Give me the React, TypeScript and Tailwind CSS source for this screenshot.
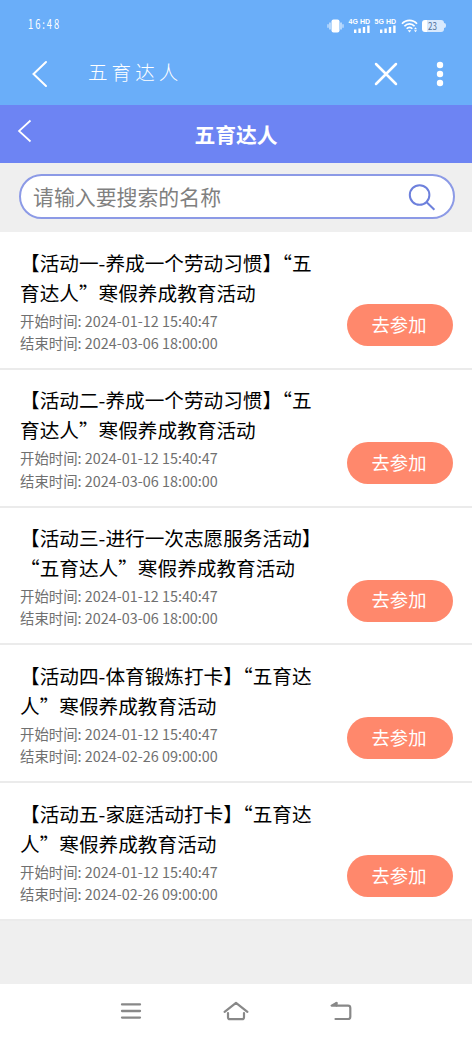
interface Activity {
  title: string[];
  start: string;
  end: string;
}

const activities: Activity[] = [
  {
    title: ["【活动一-养成一个劳动习惯】“五", "育达人”寒假养成教育活动"],
    start: "2024-01-12 15:40:47",
    end: "2024-03-06 18:00:00",
  },
  {
    title: ["【活动二-养成一个劳动习惯】“五", "育达人”寒假养成教育活动"],
    start: "2024-01-12 15:40:47",
    end: "2024-03-06 18:00:00",
  },
  {
    title: ["【活动三-进行一次志愿服务活动】", "“五育达人”寒假养成教育活动"],
    start: "2024-01-12 15:40:47",
    end: "2024-03-06 18:00:00",
  },
  {
    title: ["【活动四-体育锻炼打卡】“五育达", "人”寒假养成教育活动"],
    start: "2024-01-12 15:40:47",
    end: "2024-02-26 09:00:00",
  },
  {
    title: ["【活动五-家庭活动打卡】“五育达", "人”寒假养成教育活动"],
    start: "2024-01-12 15:40:47",
    end: "2024-02-26 09:00:00",
  },
];

export default function App() {
  return (
    <div
      lang="zh-CN"
      className="flex h-[1039px] w-[472px] flex-col overflow-hidden bg-[#efefef] font-['Noto_Sans_CJK_SC',sans-serif]"
    >
      <div className="h-[105px] shrink-0 bg-[#6aaef9] text-white">
        <StatusBar />
        <WebviewBar />
      </div>
      <PageHeader />
      <SearchBox />
      <ul className="shrink-0">
        {activities.map((activity, index) => (
          <ActivityRow key={index} activity={activity} />
        ))}
      </ul>
      <SystemNav />
    </div>
  );
}

function StatusBar() {
  return (
    <div className="flex h-[48px] items-center pl-[28px] pr-[26px]">
      <span className="origin-left scale-x-75 text-[12.5px] leading-none tracking-[2.6px]">16:48</span>
      <div className="ml-auto flex items-center pt-[3px]">
        <svg width="17" height="14" viewBox="0 0 17 14" fill="white">
          <rect x="4.5" y="0.5" width="8" height="13" rx="2" />
          <path d="M3 3.5v7M14 3.5v7" stroke="white" strokeWidth="1.3" opacity="0.8" />
          <path d="M1 5.2v3.6M16 5.2v3.6" stroke="white" strokeWidth="1.2" opacity="0.7" />
        </svg>
        <Signal label="4G HD" />
        <Signal label="5G HD" />
        <svg className="ml-[5px]" width="17" height="14" viewBox="0 0 17 14" fill="none">
          <path
            d="M1 4.7C5 .2 12 .2 16 4.7M3.4 7.3c2.8-3.2 7.4-3.2 10.2 0M5.7 9.8c1.6-1.8 4-1.8 5.6 0"
            stroke="white"
            strokeWidth="1.7"
          />
          <path d="M6.7 11.3h3.6L8.5 13.5z" fill="white" />
          <path d="M13 10.2l1.5-2 1.5 2zM13 11.3l1.5 2 1.5-2z" fill="white" />
        </svg>
        <div className="ml-[4px] flex h-[12px] w-[22px] items-center justify-center rounded-[3px] bg-[linear-gradient(90deg,#fff_24%,#d8e9fd_24%)] text-[#506f98]">
          <span className="scale-x-80 text-[10px] leading-none">23</span>
        </div>
        <div className="h-[5px] w-[2px] rounded-r-full bg-[#d8e9fd]" />
      </div>
    </div>
  );
}

function Signal({ label }: { label: string }) {
  return (
    <div className="ml-[4px] flex w-[22px] flex-col items-end">
      <span className="whitespace-nowrap font-['Liberation_Sans',sans-serif] text-[7px] font-bold leading-[7px]">
        {label}
      </span>
      <svg width="16" height="8" viewBox="0 0 16 8" fill="white">
        <path d="M0 4.5h2.4V8H0zM4.4 3.5h2.4V8H4.4zM8.8 2h2.4v6H8.8zM13.2 .5h2.4V8h-2.4z" />
      </svg>
    </div>
  );
}

function WebviewBar() {
  return (
    <div className="flex h-[51px] items-center pl-[31px] pr-[28px]">
      <svg width="17" height="28" viewBox="0 0 17 28" fill="none">
        <path d="M15 2L2.5 14 15 26" stroke="white" strokeWidth="2" strokeLinecap="round" />
      </svg>
      <span className="ml-[40px] pb-[3px] text-[19.5px] font-light tracking-[4.1px]">五育达人</span>
      <svg className="ml-auto" width="24" height="24" viewBox="0 0 24 24" fill="none">
        <path d="M2 2l20 20M22 2L2 22" stroke="white" strokeWidth="2.5" strokeLinecap="round" />
      </svg>
      <svg className="ml-[38px]" width="8" height="26" viewBox="0 0 8 26" fill="white">
        <circle cx="4" cy="4" r="3.2" />
        <circle cx="4" cy="13" r="3.2" />
        <circle cx="4" cy="22" r="3.2" />
      </svg>
    </div>
  );
}

function PageHeader() {
  return (
    <header className="grid h-[57.5px] shrink-0 grid-cols-[1fr_auto_1fr] items-center bg-[#6d84f3] text-white">
      <svg className="mb-[6px] ml-[17px]" width="16" height="24" viewBox="0 0 16 24" fill="none">
        <path d="M13.5 1.5L2 12l11.5 10.5" stroke="white" strokeWidth="1.7" />
      </svg>
      <h1 className="text-[20.8px] font-bold leading-[30px]">五育达人</h1>
    </header>
  );
}

function SearchBox() {
  return (
    <div className="h-[69.5px] shrink-0 pl-[19px] pr-[17px] pt-[11.5px]">
      <div className="flex h-[45px] items-center justify-between rounded-full border-2 border-[#8c9ae6] bg-white pl-[12px] pr-[17px]">
        <span className="pb-px text-[20.9px] leading-[30px] text-[#808080]">请输入要搜索的名称</span>
        <svg width="28" height="28" viewBox="0 0 28 28" fill="none" stroke="#6d80dc" strokeWidth="2">
          <circle cx="11.6" cy="12" r="9.8" />
          <path d="M18.4 19l8 7.8" />
        </svg>
      </div>
    </div>
  );
}

function ActivityRow({ activity }: { activity: Activity }) {
  return (
    <li className="flex h-[137.8px] justify-between border-b-2 border-[#ebebeb] bg-white pl-[20px] pr-[19px]">
      <div className="whitespace-nowrap pt-[15.5px]">
        <h2 className="text-[19.65px] leading-[30px] text-black">
          {activity.title.map((line) => (
            <span key={line} className="block">
              {line}
            </span>
          ))}
        </h2>
        <div className="pt-[2px] text-[14.4px] leading-[22.2px] text-[#707070]">
          <p>开始时间: {activity.start}</p>
          <p>结束时间: {activity.end}</p>
        </div>
      </div>
      <button className="mt-[72px] h-[42px] w-[106px] rounded-full bg-[#ff886c] pb-px pr-[2px] text-[18.3px] text-white">
        去参加
      </button>
    </li>
  );
}

function SystemNav() {
  return (
    <nav className="mt-auto flex h-[55px] shrink-0 items-center justify-between bg-white px-[120px] pb-[2px]">
      <svg width="22" height="18" viewBox="0 0 22 18" stroke="#888" strokeWidth="2.3" strokeLinecap="round">
        <path d="M2 2.4h18M2 9h18M2 15.6h18" />
      </svg>
      <svg
        width="26"
        height="20"
        viewBox="0 0 26 20"
        fill="none"
        stroke="#888"
        strokeWidth="2.2"
        strokeLinecap="round"
        strokeLinejoin="round"
      >
        <path d="M1.6 10.8L13 1.8l11.4 9M5 12v4.2c0 1.4.7 2 2 2h12c1.3 0 2-.6 2-2V12" />
      </svg>
      <svg
        width="22"
        height="20"
        viewBox="0 0 22 20"
        fill="none"
        stroke="#888"
        strokeWidth="2.2"
        strokeLinecap="round"
        strokeLinejoin="round"
      >
        <path d="M6.5 2L1.6 4.6H18c1.6 0 2.3.7 2.3 2.3v8.8c0 1.6-.7 2.3-2.3 2.3H5.5" />
        <path d="M6.5 2v2.6" />
      </svg>
    </nav>
  );
}
